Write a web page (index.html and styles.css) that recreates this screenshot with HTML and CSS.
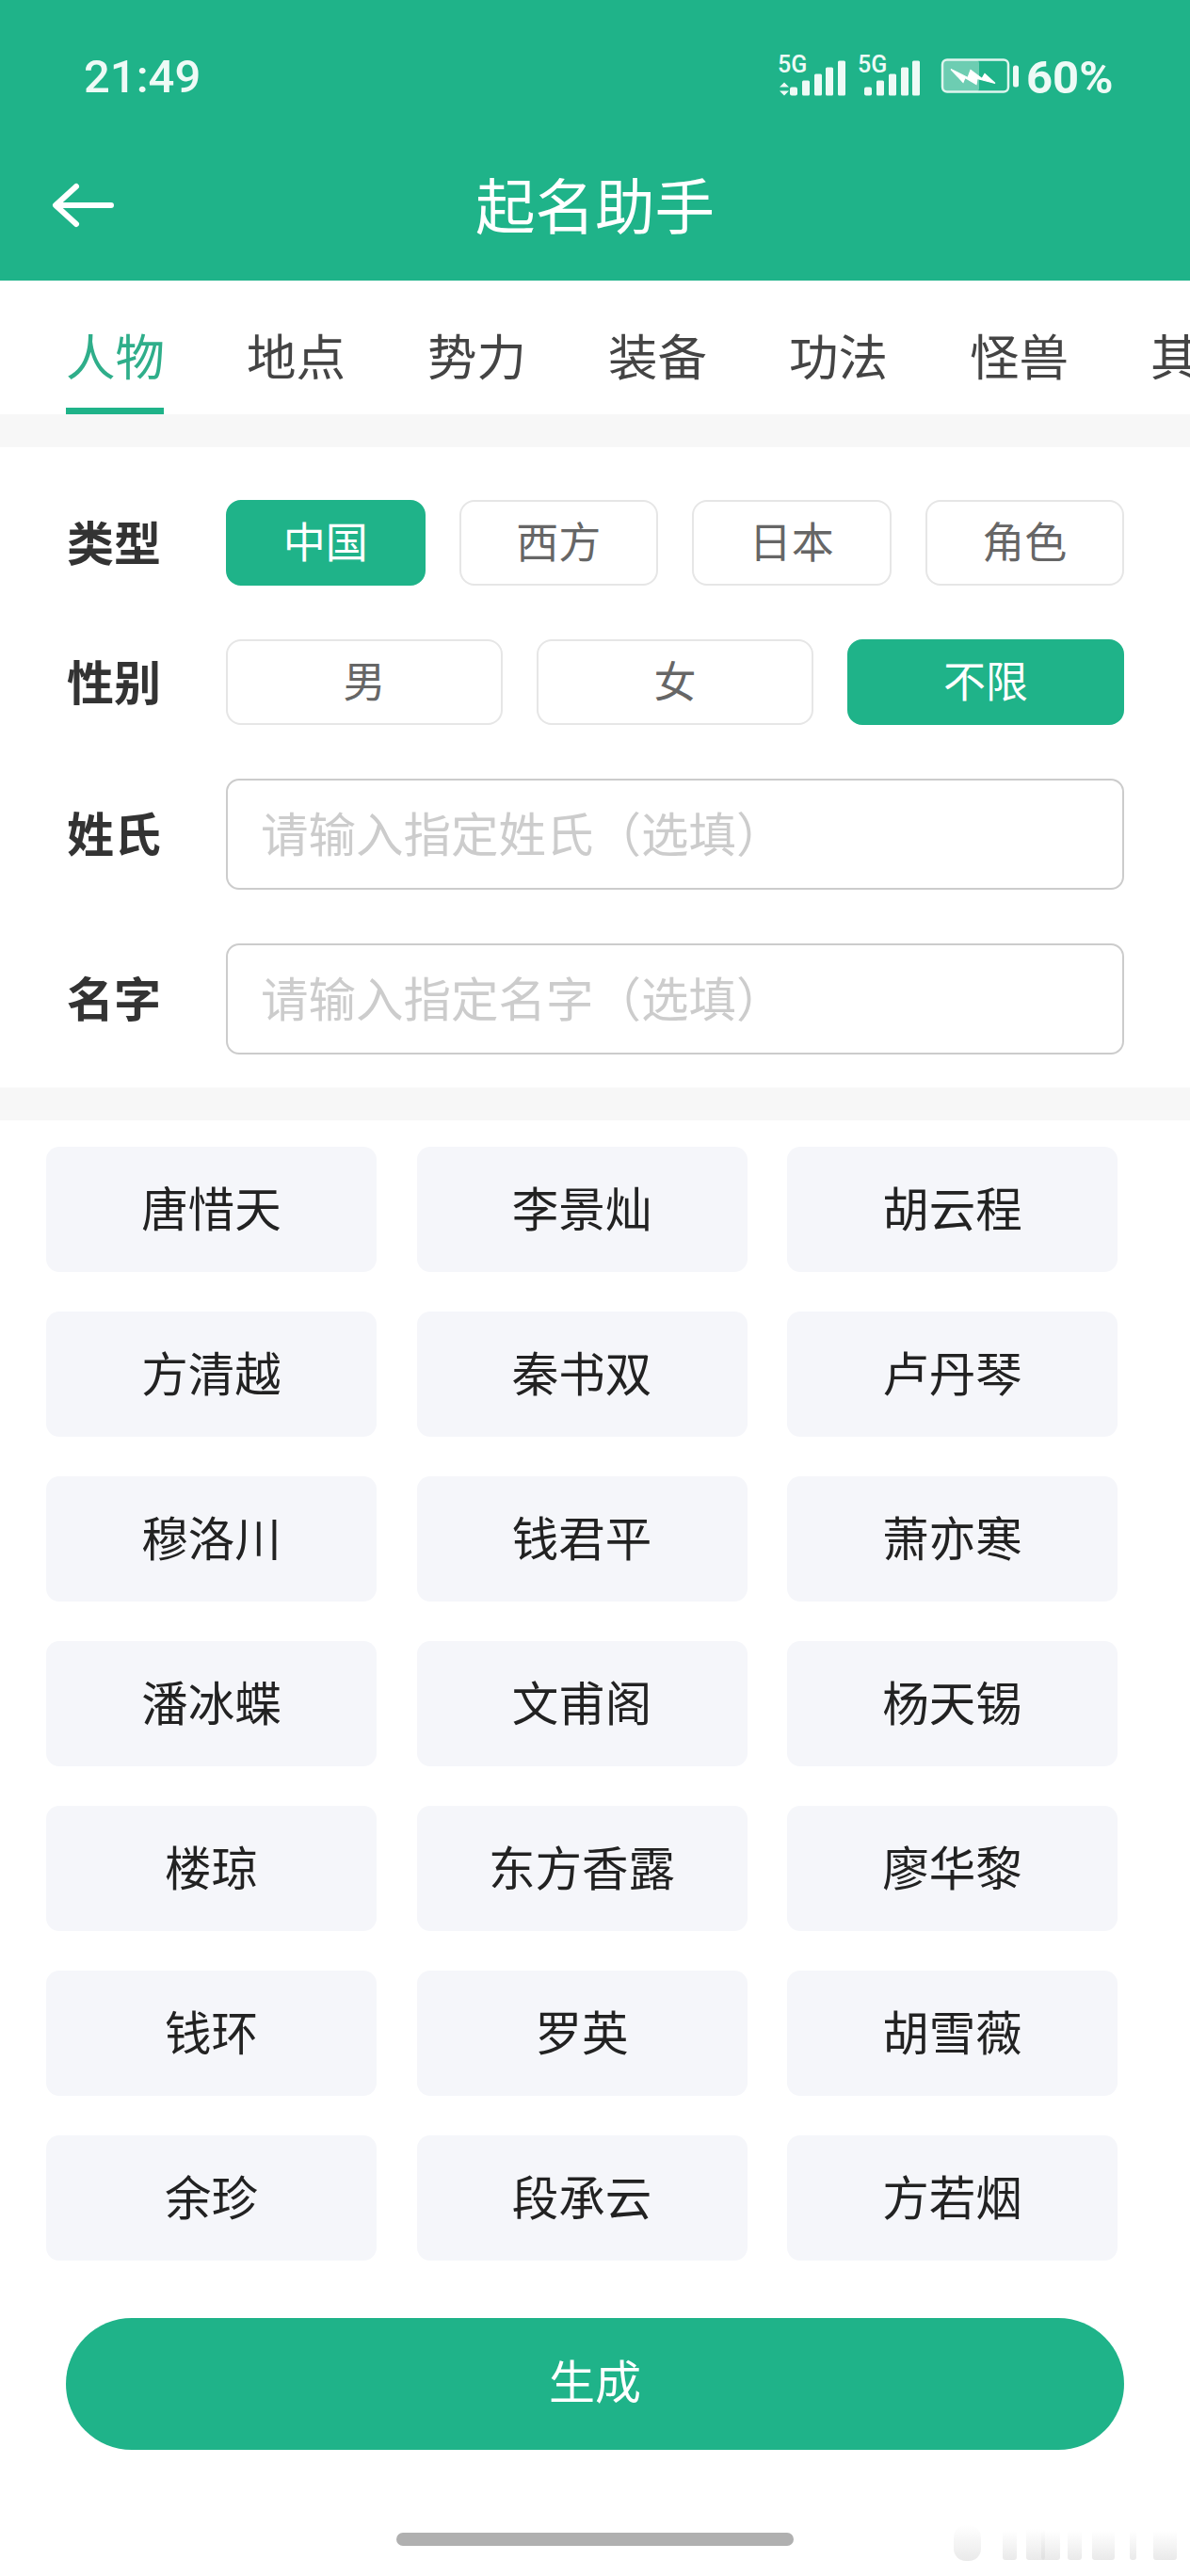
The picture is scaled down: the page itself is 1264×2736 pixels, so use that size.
FILE: index.html
```html
<!DOCTYPE html>
<html lang="zh-CN">
<head>
    <meta charset="UTF-8">
    <title>起名助手</title>
    <link rel="stylesheet" href="styles.css">
</head>
<body>
<div class="page">
    <div class="top-head">
        <div class="status-bar">
            <span class="time">21:49</span>
            <svg class="status-icons" width="372" height="80" viewBox="824 41.5 372 80">
                <text class="net" x="826" y="76">5G</text>
                <path class="solid" d="M833 87l5 5h-10zM833 101l-5-5h10z"/>
                <rect class="solid" x="839" y="92" width="8" height="9" rx="2"/>
                <rect class="solid" x="852" y="85" width="8" height="16" rx="1.5"/>
                <rect class="solid" x="865" y="78" width="8" height="23" rx="1.5"/>
                <rect class="solid" x="877" y="71" width="8" height="30" rx="1.5"/>
                <rect class="solid" x="890" y="64" width="8" height="37" rx="1.5"/>
                <text class="net" x="911" y="76">5G</text>
                <rect class="solid" x="918" y="92" width="8" height="9" rx="2"/>
                <rect class="solid" x="931" y="85" width="8" height="16" rx="1.5"/>
                <rect class="solid" x="944" y="78" width="8" height="23" rx="1.5"/>
                <rect class="solid" x="957" y="71" width="8" height="30" rx="1.5"/>
                <rect class="solid" x="969" y="64" width="8" height="37" rx="1.5"/>
                <rect class="batt-fill" x="1001" y="63" width="39" height="34" rx="4"/>
                <rect class="batt-line" x="1001" y="63" width="70" height="34" rx="5"/>
                <rect class="solid" x="1076" y="69" width="6" height="23" rx="2.5"/>
                <path class="solid bolt" d="M1010 73l18 9 3-8 12 9 3-5 11 10-19-5-1 6-12-7-2 5z"/>
                <text class="pct" x="1090" y="98">60%</text>
            </svg>
        </div>
        <div class="nav-bar">
            <svg class="back" width="70" height="50" viewBox="0 0 70 50">
                <path d="M64 25H6M27 5L5 25l22 20" fill="none" stroke="#fff" stroke-width="6" stroke-linecap="round" stroke-linejoin="round"/>
            </svg>
            <div class="nav-title">起名助手</div>
        </div>
    </div>

    <div class="tabs">
        <div class="tab tab-on">人物</div>
        <div class="tab">地点</div>
        <div class="tab">势力</div>
        <div class="tab">装备</div>
        <div class="tab">功法</div>
        <div class="tab">怪兽</div>
        <div class="tab">其他</div>
    </div>

    <div class="gap"></div>

    <div class="form">
        <div class="row">
            <div class="label">类型</div>
            <div class="opts">
                <div class="opt opt-on">中国</div>
                <div class="opt">西方</div>
                <div class="opt">日本</div>
                <div class="opt">角色</div>
            </div>
        </div>
        <div class="row">
            <div class="label">性别</div>
            <div class="opts">
                <div class="opt">男</div>
                <div class="opt">女</div>
                <div class="opt opt-on">不限</div>
            </div>
        </div>
        <div class="row">
            <div class="label">姓氏</div>
            <input class="field" type="text" placeholder="请输入指定姓氏（选填）">
        </div>
        <div class="row">
            <div class="label">名字</div>
            <input class="field" type="text" placeholder="请输入指定名字（选填）">
        </div>
    </div>

    <div class="gap"></div>

    <div class="names">
        <div class="name">唐惜天</div>
        <div class="name">李景灿</div>
        <div class="name">胡云程</div>
        <div class="name">方清越</div>
        <div class="name">秦书双</div>
        <div class="name">卢丹琴</div>
        <div class="name">穆洛川</div>
        <div class="name">钱君平</div>
        <div class="name">萧亦寒</div>
        <div class="name">潘冰蝶</div>
        <div class="name">文甫阁</div>
        <div class="name">杨天锡</div>
        <div class="name">楼琼</div>
        <div class="name">东方香露</div>
        <div class="name">廖华黎</div>
        <div class="name">钱环</div>
        <div class="name">罗英</div>
        <div class="name">胡雪薇</div>
        <div class="name">余珍</div>
        <div class="name">段承云</div>
        <div class="name">方若烟</div>
    </div>

    <div class="make">生成</div>
    <div class="home-bar"></div>

    <svg class="mark" width="264" height="76" viewBox="0 0 264 76">
        <defs>
            <linearGradient id="fade" x1="0" y1="0" x2="0" y2="1">
                <stop offset="0" stop-color="#d8d8d8" stop-opacity="0"/>
                <stop offset="1" stop-color="#d8d8d8" stop-opacity=".55"/>
            </linearGradient>
        </defs>
        <rect x="13" y="22" width="29" height="38" rx="13" fill="url(#fade)"/>
        <rect x="65" y="28" width="15" height="31" rx="3" fill="url(#fade)"/>
        <rect x="90" y="26" width="20" height="33" rx="3" fill="url(#fade)"/>
        <rect x="106" y="28" width="20" height="31" rx="3" fill="url(#fade)"/>
        <rect x="134" y="28" width="15" height="31" rx="3" fill="url(#fade)"/>
        <rect x="160" y="28" width="24" height="31" rx="3" fill="url(#fade)"/>
        <rect x="200" y="28" width="7" height="31" rx="3" fill="url(#fade)"/>
        <rect x="225" y="28" width="25" height="31" rx="3" fill="url(#fade)"/>
    </svg>
</div>
</body>
</html>
```

FILE: styles.css
```css
* {
    margin: 0;
    padding: 0;
    box-sizing: border-box;
}
body {
    background: #fff;
    font-family: "Noto Sans CJK SC", "Noto Sans", sans-serif;
}
.page {
    position: relative;
    width: 1264px;
    height: 2736px;
    overflow: hidden;
    background: #fff;
}

/* green head */
.top-head {
    height: 298px;
    background: #1fb389;
    color: #fff;
}
.status-bar {
    height: 137px;
    padding: 26px 0 0 89px;
    display: flex;
    align-items: center;
    justify-content: space-between;
}
.time {
    font-family: Roboto, sans-serif;
    font-size: 49px;
    font-weight: 500;
    color: #eefaf6;
}
.status-icons {
    margin-right: 68px;
}
.solid {
    fill: #eefaf6;
}
.bolt {
    fill: #fff;
    stroke: #fff;
    stroke-width: 1.2;
}
.net {
    fill: #eefaf6;
    font-family: Roboto, sans-serif;
    font-size: 25px;
    font-weight: 500;
}
.pct {
    fill: #eefaf6;
    font-family: Roboto, sans-serif;
    font-size: 49px;
    font-weight: 700;
}
.batt-fill {
    fill: #fff;
    opacity: .35;
}
.batt-line {
    fill: none;
    stroke: #dff5ee;
    stroke-width: 2.5;
}
.nav-bar {
    height: 161px;
    position: relative;
    display: flex;
    align-items: center;
    justify-content: center;
}
.back {
    position: absolute;
    left: 54px;
    top: 56px;
}
.nav-title {
    font-size: 63.5px;
    line-height: 80px;
    padding-bottom: 5px;
}

/* tabs */
.tabs {
    height: 142px;
    display: flex;
    gap: 88px;
    padding-left: 70px;
    overflow: hidden;
}
.tab {
    flex: none;
    width: 104px;
    height: 142px;
    padding-top: 23px;
    font-size: 52.5px;
    line-height: 110px;
    text-align: center;
    white-space: nowrap;
    color: #444;
    border-bottom: 7px solid transparent;
}
.tab-on {
    color: #2fae8a;
    border-bottom-color: #1fb389;
}
.gap {
    height: 35px;
    background: #f7f7f7;
}

/* form */
.form {
    height: 680px;
    padding: 56px 70px 0 71px;
}
.row {
    display: flex;
    align-items: center;
    margin-bottom: 57px;
}
.label {
    flex: none;
    width: 169px;
    padding-bottom: 6px;
    font-size: 50px;
    font-weight: 700;
    color: #333;
}
.opts {
    flex: 1;
    display: flex;
    gap: 36px;
}
.opt {
    flex: 1;
    height: 91px;
    font-size: 45px;
    line-height: 81px;
    text-align: center;
    color: #666;
    border: 2px solid #e6e6e6;
    border-radius: 16px;
}
.opt-on {
    color: #fff;
    background: #1fb389;
    border-color: #1fb389;
}
.field {
    flex: 1;
    height: 118px;
    padding: 0 35px 6px;
    font-family: inherit;
    font-size: 50.5px;
    background: #fff;
    border: 2px solid #ccc;
    border-radius: 14px;
    outline: none;
}
.field::placeholder {
    color: #ccc;
    opacity: 1;
}

/* generated names */
.names {
    display: grid;
    grid-template-columns: repeat(3, 351px);
    grid-auto-rows: 133px;
    column-gap: 42.5px;
    row-gap: 42px;
    padding: 28px 0 0 49px;
}
.name {
    display: flex;
    align-items: center;
    justify-content: center;
    padding-bottom: 7px;
    font-size: 49.5px;
    color: #222;
    background: #f5f6fa;
    border-radius: 14px;
}
.make {
    height: 140px;
    margin: 61px 70px 0;
    font-size: 49px;
    line-height: 130px;
    text-align: center;
    color: #fff;
    background: #1fb389;
    border-radius: 70px;
}
.home-bar {
    width: 422px;
    height: 14px;
    margin: 88px auto 0;
    background: #b0b0b0;
    border-radius: 7px;
}
.mark {
    position: absolute;
    right: 0;
    bottom: 0;
}
```
